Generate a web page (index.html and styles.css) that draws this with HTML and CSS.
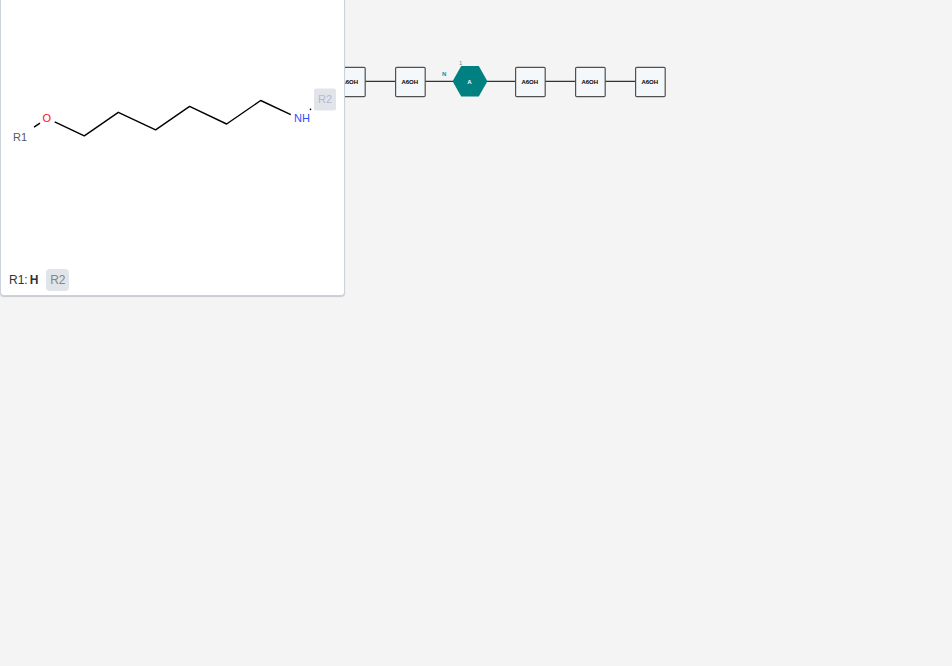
FILE: index.html
```html
<!DOCTYPE html>
<html lang="en">
<head>
<meta charset="utf-8">
<title>Monomer preview</title>
<link rel="stylesheet" href="styles.css">
</head>
<body>
<main class="editor">
  <svg class="canvas" width="952" height="666" viewBox="0 0 952 666">
    <defs>
      <g id="chem">
        <rect class="monomer" x="0.6" y="0.4" width="29.6" height="29.2" rx="1.2"/>
        <text class="monomer-label" x="14.8" y="17.2">A6OH</text>
      </g>
    </defs>
    <path class="bond" d="M365 81.3H396M425 81.3H453M487 81.3H516M545 81.3H576M605 81.3H636"/>
    <use href="#chem" x="335" y="67"/>
    <use href="#chem" x="395" y="67"/>
    <path class="peptide" d="M452.6 81.3L461.2 66H478.8L487.4 81.3L478.8 96.6H461.2Z"/>
    <text class="peptide-label" x="469.3" y="84">A</text>
    <text class="terminal" x="444.2" y="76">N</text>
    <text class="position" x="460.6" y="65.2">1</text>
    <use href="#chem" x="515" y="67"/>
    <use href="#chem" x="575" y="67"/>
    <use href="#chem" x="635" y="67"/>
  </svg>
  <section class="preview">
    <svg class="structure" width="343" height="260" viewBox="1 0 343 260">
      <path class="chain" d="M34 127.2L40 123.2M54.7 121.8L84.3 135.8L118.3 112.3L155.6 129.8L189.6 106.4L226.6 124L260.7 100.5L290.8 114.7"/>
      <circle cx="310.5" cy="109.4" r="0.8"/>
      <text class="atom group" x="13" y="141">R1</text>
      <text class="atom oxygen" x="42.6" y="122.3">O</text>
      <text class="atom nitrogen" x="294" y="122.3">NH</text>
      <rect class="occupied" x="314" y="88.5" width="22" height="22" rx="2"/>
      <text class="atom faded" x="318" y="103.2">R2</text>
    </svg>
    <div class="points">
      <span class="point">R1:<b>H</b></span>
      <span class="point connected">R2</span>
    </div>
  </section>
</main>
</body>
</html>
```
FILE: styles.css
```css
body {
  margin: 0;
  background: #f4f4f4;
  font-family: "Liberation Sans", Arial, sans-serif;
}
.editor {
  position: relative;
  height: 666px;
  overflow: hidden;
}
.canvas, .structure { display: block; }
.bond { stroke: #333; stroke-width: 1.2; }
.monomer { fill: #f5f8fa; stroke: #505050; stroke-width: 1.2; }
.monomer-label, .peptide-label {
  font-size: 6px;
  font-weight: 700;
  text-anchor: middle;
}
.peptide { fill: #008080; }
.peptide-label { fill: #fff; }
.terminal {
  font-size: 6px;
  font-weight: 700;
  text-anchor: middle;
  fill: #0097a8;
}
.position { font-size: 6px; text-anchor: middle; fill: #888; }
.preview {
  position: absolute;
  top: 0;
  left: 0;
  box-sizing: border-box;
  width: 345px;
  height: 296px;
  border: 1px solid #cad3dd;
  border-top: 0;
  border-radius: 0 0 4px 4px;
  background: #fff;
  box-shadow: 0 1px 1px rgba(103, 104, 132, 0.3);
}
.chain {
  fill: none;
  stroke: #000;
  stroke-width: 1.4;
  stroke-linejoin: round;
}
.atom { font-size: 11px; }
.group { fill: #585858; }
.oxygen { fill: #ff0d0d; }
.nitrogen { fill: #304ff7; }
.occupied { fill: #e1e5ea; }
.faded { fill: #b4b9d6; }
.points {
  display: flex;
  align-items: center;
  gap: 8px;
  margin: 9px 0 0 8px;
  font-size: 12px;
  color: #333;
}
.point b { margin-left: 2px; }
.connected {
  box-sizing: border-box;
  width: 23px;
  height: 22px;
  border-radius: 4px;
  background: #e1e5ea;
  color: #858585;
  line-height: 22px;
  text-align: center;
}
```
